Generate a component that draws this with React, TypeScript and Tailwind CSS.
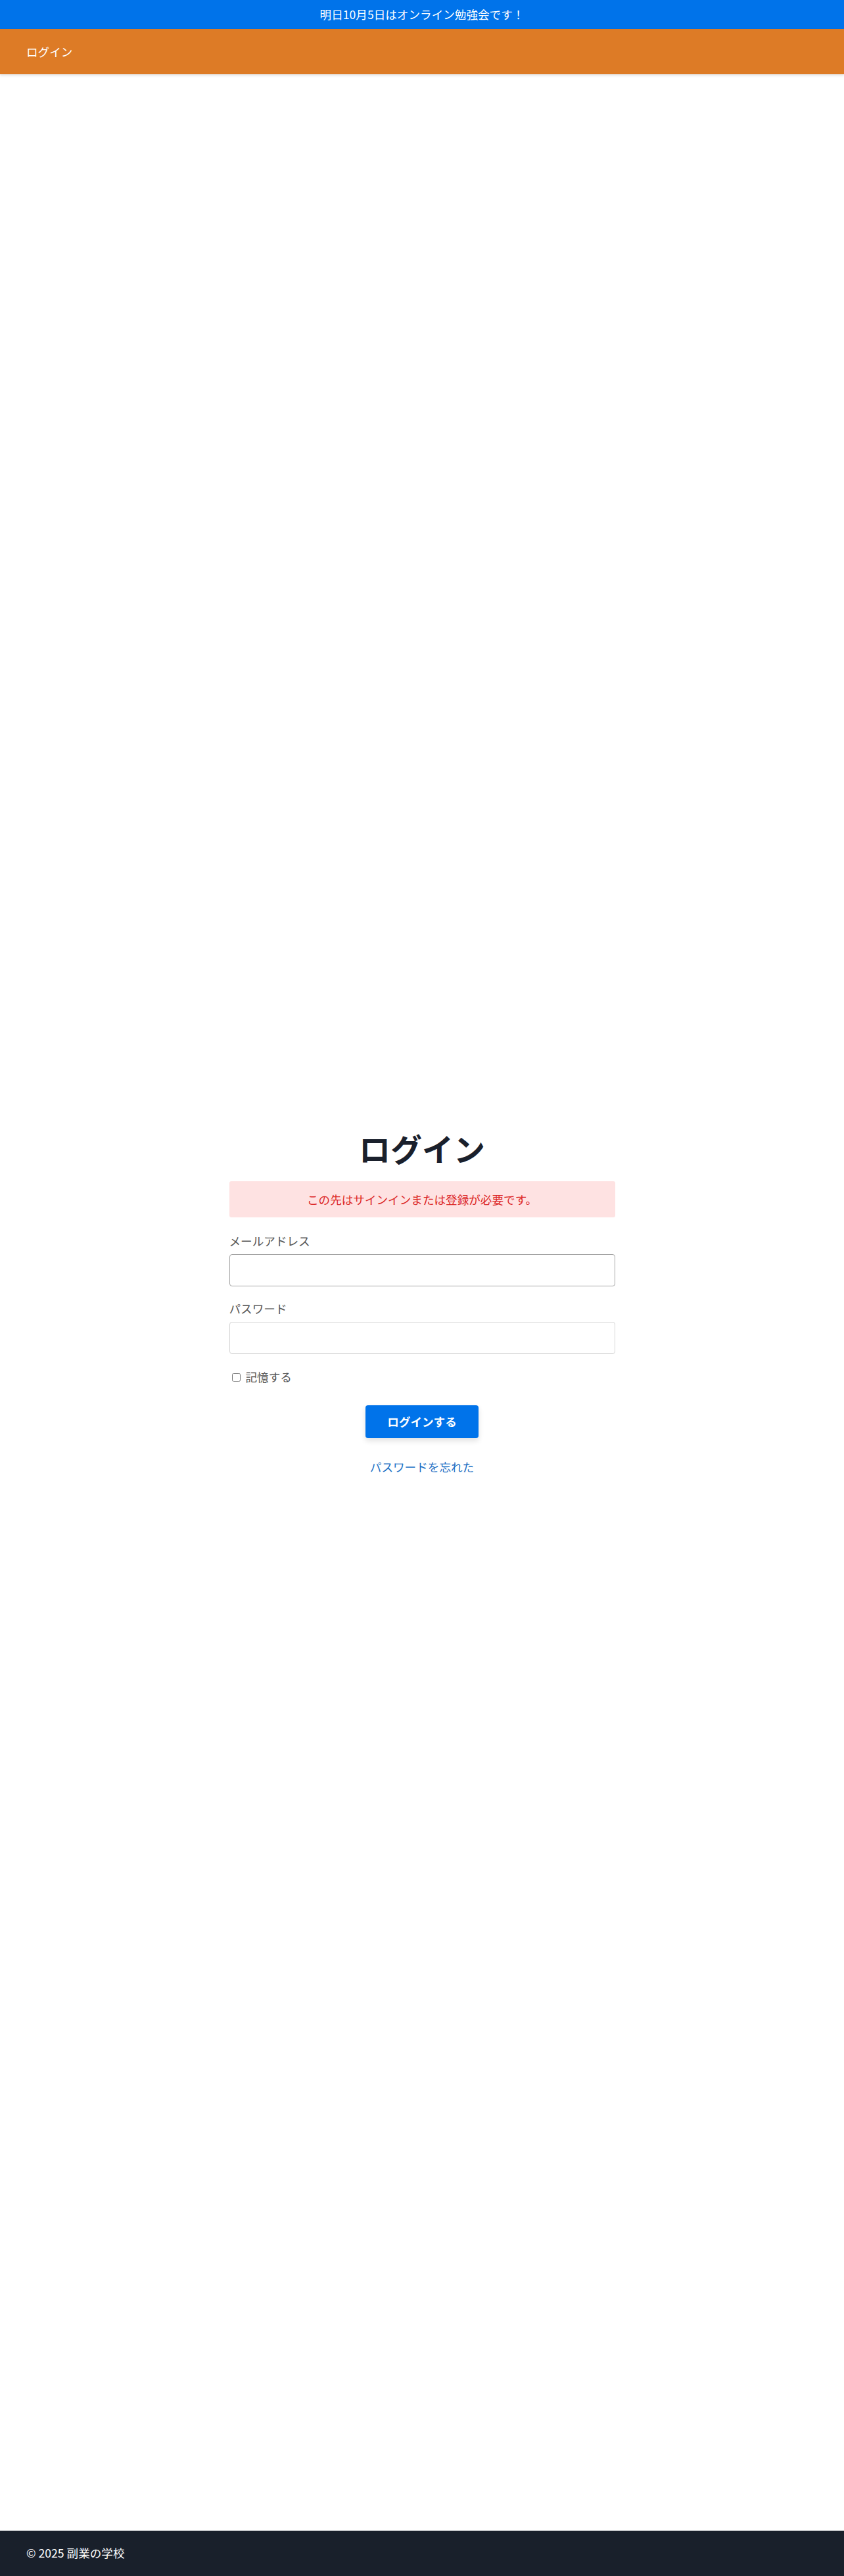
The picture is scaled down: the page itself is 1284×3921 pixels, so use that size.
const font = "font-['Noto_Sans_CJK_JP','Noto_Sans',sans-serif]";

export default function App() {
  return (
    <div className={`flex min-h-screen flex-col bg-white ${font} text-[17.6px]`}>
      {/* お知らせ */}
      <div className="flex h-[44px] items-center justify-center bg-[#0073ea] text-white">
        明日10月5日はオンライン勉強会です！
      </div>

      {/* ナビ */}
      <header className="relative flex h-[69px] items-center bg-[#dd7b26] px-[40px] text-white shadow-[0_2px_4px_rgba(0,0,0,0.12)]">
        <a href="#" className="leading-6">ログイン</a>
      </header>

      <main className="flex flex-1 items-center justify-center">
        <div className="w-[587px]">
          <h1 className="text-center text-5xl font-bold leading-[54px] text-[#1a202c]">ログイン</h1>

          <div className="mt-6 rounded-[3px] bg-[#fee2e2] py-4 text-center leading-[23px] text-[#dc2626]">
            この先はサインインまたは登録が必要です。
          </div>

          <form className="mt-6">
            <label className="mb-2 block leading-6 text-[#555]">メールアドレス</label>
            <input
              type="email"
              className="block h-[49px] w-full rounded-[4px] border border-[#a3a3a3] bg-white px-3 outline-none"
            />

            <label className="mb-2 mt-[22px] block leading-6 text-[#555]">パスワード</label>
            <input
              type="password"
              className="block h-[49px] w-full rounded-[4px] border border-[#d4d4d4] bg-white px-3 outline-none"
            />

            <div className="mt-[23px] flex items-center gap-2 pl-[4px] leading-6 text-[#555]">
              <input type="checkbox" className="h-[13px] w-[13px]" />
              <span>記憶する</span>
            </div>

            <div className="mt-[31px] flex justify-center">
              <button
                type="button"
                className="h-[50px] rounded-[4px] bg-[#0073ea] px-[33px] font-bold text-white shadow-[0_4px_8px_rgba(0,0,0,0.12)]"
              >
                ログインする
              </button>
            </div>

            <div className="mt-8 text-center leading-6">
              <a href="#" className="text-[#1a6fc4]">パスワードを忘れた</a>
            </div>
          </form>
        </div>
      </main>

      <footer className="flex h-[69px] items-center bg-[#19202b] px-[40px] text-white">
        © 2025 副業の学校
      </footer>
    </div>
  );
}
